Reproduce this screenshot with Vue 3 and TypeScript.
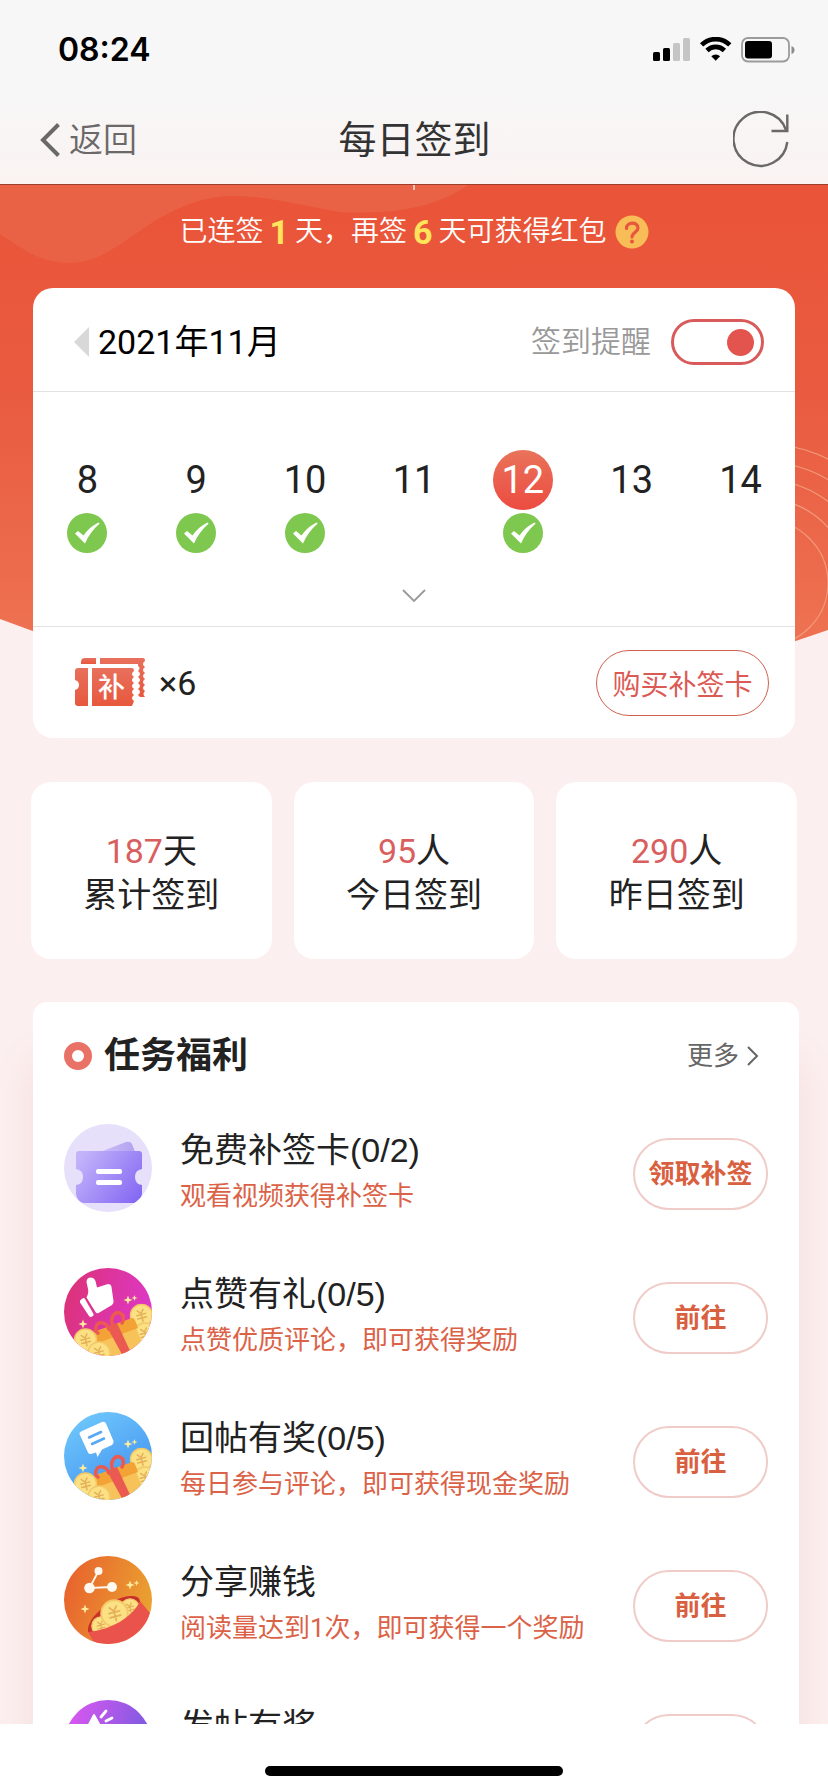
<script setup lang="ts">
import { ref } from 'vue'

interface Day {
  date: number
  signed: boolean
  today: boolean
}

interface Task {
  kind: 'ticket' | 'like' | 'reply' | 'share' | 'post'
  title: string
  hint: string
  action: string
}

const remind = ref<boolean>(true)

const days: Day[] = [8, 9, 10, 11, 12, 13, 14].map((date) => ({
  date,
  signed: [8, 9, 10, 12].includes(date),
  today: date === 12,
}))

const stats = [
  { value: 187, unit: '天', label: '累计签到' },
  { value: 95, unit: '人', label: '今日签到' },
  { value: 290, unit: '人', label: '昨日签到' },
]

const tasks: Task[] = [
  { kind: 'ticket', title: '免费补签卡(0/2)', hint: '观看视频获得补签卡', action: '领取补签' },
  { kind: 'like', title: '点赞有礼(0/5)', hint: '点赞优质评论，即可获得奖励', action: '前往' },
  { kind: 'reply', title: '回帖有奖(0/5)', hint: '每日参与评论，即可获得现金奖励', action: '前往' },
  { kind: 'share', title: '分享赚钱', hint: '阅读量达到1次，即可获得一个奖励', action: '前往' },
  { kind: 'post', title: '发帖有奖', hint: '', action: '前往' },
]
</script>

<template>
  <div class="screen">
    <!-- shared artwork and gradients -->
    <svg class="defs" width="0" height="0" aria-hidden="true">
      <defs>
        <linearGradient id="g-hero" x1="0" y1="0" x2="0" y2="1">
          <stop offset="0" stop-color="#ea5438" />
          <stop offset="0.4" stop-color="#e95b40" />
          <stop offset="0.88" stop-color="#ee7353" />
        </linearGradient>
        <linearGradient id="g-card" x1="0" y1="0" x2="0" y2="1">
          <stop offset="0" stop-color="#e8705c" />
          <stop offset="1" stop-color="#e7583d" />
        </linearGradient>
        <linearGradient id="g-ticket" x1="0" y1="0.2" x2="1" y2="0.8">
          <stop offset="0" stop-color="#c3b4fa" />
          <stop offset="1" stop-color="#8669f3" />
        </linearGradient>
        <linearGradient id="g-ticket-back" x1="0" y1="0.5" x2="1" y2="0.5">
          <stop offset="0" stop-color="#cabff8" />
          <stop offset="1" stop-color="#b3a2f1" />
        </linearGradient>
        <linearGradient id="g-like" x1="0" y1="0.3" x2="1" y2="0.6">
          <stop offset="0" stop-color="#dc3278" />
          <stop offset="1" stop-color="#dd38cc" />
        </linearGradient>
        <linearGradient id="g-reply" x1="0.2" y1="0" x2="0.8" y2="1">
          <stop offset="0" stop-color="#6fc8fb" />
          <stop offset="1" stop-color="#3f8df0" />
        </linearGradient>
        <linearGradient id="g-share" x1="0" y1="0.3" x2="1" y2="0.6">
          <stop offset="0" stop-color="#e8622d" />
          <stop offset="1" stop-color="#eaa331" />
        </linearGradient>
        <linearGradient id="g-post" x1="0" y1="0" x2="1" y2="0.3">
          <stop offset="0.1" stop-color="#d957f0" />
          <stop offset="1" stop-color="#7a5be0" />
        </linearGradient>
        <symbol id="coin" viewBox="0 0 24 24">
          <circle cx="12" cy="12" r="11" fill="#fbe184" stroke="#f3c868" stroke-width="1.6" />
          <g transform="rotate(-15 12 12)" fill="none" stroke="#e5b05a" stroke-width="1.5" stroke-linecap="round">
            <path d="M9 6.500l3 3.500 3-3.500M7.500 11h9M7.500 14.500h9M12 10v8" />
          </g>
        </symbol>
        <symbol id="sparkles" viewBox="0 0 88 88">
          <g fill="#fde9a0">
            <path d="M64 27.500l1.200 3.300 3.300 1.200-3.300 1.200-1.200 3.300-1.200-3.300-3.300-1.200 3.300-1.200z" />
            <path d="M70.500 27l.8 2.200 2.200.8-2.200.8-.8 2.200-.8-2.200-2.200-.8 2.200-.8z" />
            <path d="M19 51.500l1.200 3.300 3.300 1.200-3.300 1.200-1.200 3.300-1.200-3.300-3.300-1.200 3.300-1.200z" />
          </g>
        </symbol>
        <symbol id="gift" viewBox="0 0 88 88">
          <use href="#coin" x="65.500" y="35.500" width="24" height="24" />
          <use href="#coin" x="69" y="54" width="24" height="24" />
          <path d="M33 73L71 57 84 90H40z" fill="#f8c25a" />
          <path d="M30 66q0-2 2-3L68 50q2 0 3 2l3 8L34 75z" fill="#f3a335" />
          <path d="M43 59l10-4 15 32-8 3z" fill="#ea5a51" />
          <path d="M45 61c-3-8-12-8-13-2-1 3 0 5 2 6M49 58c-4-8 2-15 7-13 4 2 4 6 2 10" fill="none" stroke="#ea5a51" stroke-width="3.600" stroke-linecap="round" />
          <use href="#coin" x="9.500" y="60" width="24" height="24" />
          <use href="#coin" x="23" y="73" width="24" height="24" />
        </symbol>
      </defs>
    </svg>

    <header class="top">
      <div class="status">
        <time class="clock">08:24</time>
        <svg class="status-icons" width="142" height="26" viewBox="0 0 142 26" aria-hidden="true">
          <rect x="0" y="15" width="7" height="9" rx="1.500" />
          <rect x="10" y="11" width="7" height="13" rx="1.500" />
          <rect x="20" y="6" width="7" height="18" rx="1.500" fill="#c5c5c5" />
          <rect x="30" y="1" width="7" height="23" rx="1.500" fill="#c5c5c5" />
          <g fill="none" stroke="#000" stroke-width="4.600">
            <path d="M48.600 7.900a20 20 0 0 1 28.200 0" />
            <path d="M54 13.500a12.300 12.300 0 0 1 17.400 0" />
          </g>
          <path d="M58.300 19.200a6.400 6.400 0 0 1 8.800 0l-4.400 4.600z" />
          <rect x="89" y="1" width="47" height="23.500" rx="6" fill="none" stroke="#9b9b9b" stroke-width="1.800" />
          <rect x="92" y="4" width="27" height="17.500" rx="3" />
          <path d="M138.500 9q3 1 3 4t-3 4z" fill="#8c8c8c" />
        </svg>
      </div>
      <nav class="nav">
        <a class="back" href="#back">
          <svg width="20" height="34" viewBox="0 0 20 34" aria-hidden="true">
            <path d="M18.500 1.500L3 17l15.500 15.500" fill="none" stroke="#6b6869" stroke-width="4" />
          </svg>
          <span>返回</span>
        </a>
        <h1 class="title">每日签到</h1>
        <button class="refresh" type="button" aria-label="刷新">
          <svg width="56" height="58" viewBox="0 0 56 58" fill="none" stroke="#6b6869" stroke-width="2.400" aria-hidden="true">
            <path d="M54.300 31A27 27 0 1 1 53 19" />
            <path d="M54.300 3.500V20H38.500" />
          </svg>
        </button>
      </nav>
    </header>

    <main class="content">
      <svg class="hero" viewBox="0 0 828 530" preserveAspectRatio="none" aria-hidden="true">
        <clipPath id="hero-clip"><path d="M0 0H828V445Q414 592 0 434z" /></clipPath>
        <g clip-path="url(#hero-clip)">
          <rect width="828" height="530" fill="url(#g-hero)" />
          <path d="M0 0H468C440 20 400 30 340 27 290 18 260 10 225 11 150 18 120 78 70 78 40 78 20 62 0 49z" fill="#ea6245" />
          <g fill="none" stroke="#f39a7c" stroke-width="1.200">
            <circle cx="765" cy="398" r="63" />
            <circle cx="765" cy="398" r="84" />
            <circle cx="765" cy="398" r="103" />
            <circle cx="765" cy="398" r="121" />
            <circle cx="765" cy="398" r="139" />
          </g>
          <path d="M414 0v5" stroke="#fbe3dc" stroke-width="1.500" />
        </g>
      </svg>

      <div class="notice">
        <span>已连签</span><strong>1</strong><span>天，再签</span><strong>6</strong><span>天可获得红包</span>
        <button class="help" type="button" aria-label="帮助">
          <svg width="34" height="34" viewBox="0 0 34 34" aria-hidden="true">
            <circle cx="17" cy="17" r="16.500" fill="#f9bd58" />
            <path d="M11.500 13.500c0-7 11.500-7 11.500-.5 0 4-6 4.500-6 9" fill="none" stroke="#e8573c" stroke-width="3.200" stroke-linecap="round" />
            <circle cx="17" cy="26.500" r="2" fill="#e8573c" />
          </svg>
        </button>
      </div>

      <section class="calendar">
        <div class="cal-head">
          <button class="month" type="button">
            <svg width="15" height="30" viewBox="0 0 15 30" aria-hidden="true"><path d="M15 0v30L0 15z" fill="#d8d8d8" /></svg>
            <span>2021年11月</span>
          </button>
          <label class="remind">
            <span>签到提醒</span>
            <input v-model="remind" class="switch" type="checkbox" />
          </label>
        </div>
        <div class="cal-body">
          <ol class="days">
            <li v-for="d in days" :key="d.date" class="day">
              <span class="date" :class="{ today: d.today }">{{ d.date }}</span>
              <svg v-if="d.signed" width="40" height="40" viewBox="0 0 40 40" aria-label="已签到">
                <circle cx="20" cy="20" r="20" fill="#7fc850" />
                <path d="M8 20.500l3-2.500 5.500 4.500C21 16 27 11.500 32 9.500l.5 1.200C26 16 21.500 22.500 18 30.500z" fill="#fff" />
              </svg>
            </li>
          </ol>
          <button class="expand" type="button" aria-label="展开">
            <svg width="24" height="14" viewBox="0 0 24 14" aria-hidden="true"><path d="M1 1l11 11L23 1" fill="none" stroke="#999" stroke-width="1.800" /></svg>
          </button>
        </div>
        <div class="cal-foot">
          <svg class="cards-icon" width="72" height="49" viewBox="0 0 72 49" aria-hidden="true">
            <g fill="url(#g-card)">
              <path d="M11 0h11v6H7V4q0-4 4-4z" />
              <path d="M26 0h43q2 0 2 3-4 3 0 6-4 3 0 6-4 3 0 6-4 3 0 6-4 3 0 6-3 3 0 6h-5l-2-2q4-3 0-6 4-3 0-6 4-3 0-6 4-3 0-6 3-3 0-5V6H26z" />
              <path d="M4 10h10v38H4q-3 0-3-3V32q4-1 4-5t-4-5v-9q0-3 3-3z" />
              <path d="M18 10h40q2 0 2 3-4 3 0 6-4 3 0 6-4 3 0 6-4 3 0 6-4 3 0 6-2 5-2 5H18z" />
            </g>
            <text x="24" y="39" class="cards-text">补</text>
          </svg>
          <span class="count">×6</span>
          <button class="buy" type="button">购买补签卡</button>
        </div>
      </section>

      <section class="stats">
        <div v-for="s in stats" :key="s.label" class="stat">
          <p><em>{{ s.value }}</em>{{ s.unit }}</p>
          <p>{{ s.label }}</p>
        </div>
      </section>

      <section class="tasks">
        <div class="tasks-head">
          <svg width="28" height="28" viewBox="0 0 28 28" aria-hidden="true"><circle cx="14" cy="14" r="10" fill="none" stroke="#ea7166" stroke-width="8" /></svg>
          <h2>任务福利</h2>
          <a class="more" href="#more">
            <span>更多</span>
            <svg width="12" height="20" viewBox="0 0 12 20" aria-hidden="true"><path d="M1 1l9 9-9 9" fill="none" stroke="#666" stroke-width="2" /></svg>
          </a>
        </div>
        <ul class="task-list">
          <li v-for="t in tasks" :key="t.title" class="task">
            <svg class="task-icon" width="88" height="88" viewBox="0 0 88 88" aria-hidden="true">
              <template v-if="t.kind === 'ticket'">
                <rect width="88" height="88" fill="#e6e0fa" />
                <path d="M36 28L62 18q4-1 6 2l3 8z" fill="url(#g-ticket-back)" />
                <path d="M15 27H75q3 0 3 3V45q-7 1-7 8t7 8V70q-1 8-8 9H19q-6-2-7-9V61q7-1 7-8t-7-8V30q0-3 3-3z" fill="url(#g-ticket)" />
                <rect x="32" y="45" width="26" height="5" rx="2" fill="#fff" />
                <rect x="32" y="56" width="26" height="5" rx="2" fill="#fff" />
              </template>
              <template v-else-if="t.kind === 'like'">
                <rect width="88" height="88" fill="url(#g-like)" />
                <path d="M16 32.500l2.500-2q1.500-1 2.500.5L29.500 46q.5 1-.5 2l-2 1q-1 .5-2-1L16 34.500z" fill="#fff" />
                <path d="M22.500 29.500Q25 25 24 21L22.500 14c0-5.500 7-6 9-1L33 19.500 44 16q3 0 3.500 3l2 14q.5 2.500-1.500 4L34.500 45q-2 1-3-1z" fill="#fff" />
                <use href="#sparkles" />
                <use href="#gift" />
              </template>
              <template v-else-if="t.kind === 'reply'">
                <rect width="88" height="88" fill="url(#g-reply)" />
                <path d="M17 19.500L38 10q3-1 4 1.500L49.500 29q.5 2.500-1.500 4L38 37.500 33.500 45 32 40.500 27 42q-2 .5-3-1.500L15.500 22q-.5-1.500 1.500-2.500z" fill="#fff" />
                <path d="M25 25.500L37 20M28 32l12-5.500" stroke="#57a9f5" stroke-width="2.600" stroke-linecap="round" />
                <use href="#sparkles" />
                <use href="#gift" />
              </template>
              <template v-else-if="t.kind === 'share'">
                <rect width="88" height="88" fill="url(#g-share)" />
                <path d="M34.500 15l-9 17L48 31" fill="none" stroke="#fff8ee" stroke-width="1.800" />
                <g fill="#fff8ee">
                  <circle cx="34.500" cy="15" r="4" />
                  <circle cx="25.500" cy="32" r="5.300" />
                  <circle cx="48" cy="31" r="5" />
                </g>
                <use href="#sparkles" x="2" y="-3" />
                <path d="M24 76C22 62 46 42 66 40q10-1 10 6L40 78z" fill="#c9302b" />
                <use href="#coin" x="27" y="60" width="20" height="20" />
                <use href="#coin" x="56" y="42" width="20" height="20" />
                <use href="#coin" x="36" y="43" width="29" height="29" />
                <path d="M24 76C46 74 68 62 76 45L90 62V90H32z" fill="#ea534c" />
              </template>
              <template v-else>
                <rect width="88" height="88" fill="url(#g-post)" />
                <path d="M30 15L20 34 44 40z" fill="#fff" stroke="#fff" stroke-width="2" stroke-linejoin="round" />
                <path d="M37 17l5-6M42 21l6-3" stroke="#fff" stroke-width="2.800" stroke-linecap="round" />
              </template>
            </svg>
            <div class="task-text">
              <h3>{{ t.title }}</h3>
              <p v-if="t.hint">{{ t.hint }}</p>
            </div>
            <button class="go" type="button">{{ t.action }}</button>
          </li>
        </ul>
      </section>
    </main>

    <footer class="home"><span class="bar"></span></footer>
  </div>
</template>

<style>
html,
body {
  margin: 0;
  background: #fff;
}
</style>

<style scoped>
.screen {
  display: flex;
  flex-direction: column;
  height: 100vh;
  overflow: hidden;
  background: #fff;
  color: #222;
  font-family: Roboto, "Noto Sans CJK SC", sans-serif;
  font-size: 34px;
  font-weight: 400;
}
.screen * {
  box-sizing: border-box;
}
h1,
h2,
h3,
p,
ol,
ul {
  margin: 0;
  padding: 0;
  list-style: none;
  font-weight: inherit;
  font-size: inherit;
}
button {
  padding: 0;
  border: 0;
  background: none;
  color: inherit;
  font: inherit;
}
a {
  color: inherit;
  text-decoration: none;
}
svg {
  display: block;
  flex: none;
}
.defs {
  position: absolute;
}
.top {
  flex: none;
  border-bottom: 1px solid #9c3f2b;
  background: linear-gradient(#f7f7f7 45%, #faf3f2);
}
.status {
  display: flex;
  align-items: center;
  justify-content: space-between;
  height: 99px;
  padding: 0 33px 0 58px;
}
.clock {
  color: #000;
  font-family: Inter, sans-serif;
  font-size: 32px;
  font-weight: 600;
}
.nav {
  display: grid;
  grid-template-columns: 1fr auto 1fr;
  align-items: center;
  height: 85px;
  padding: 0 39px 4px 40px;
}
.back {
  display: flex;
  align-items: center;
  gap: 9px;
  color: #6b6869;
  font-weight: 350;
  line-height: 40px;
}
.title {
  color: #333;
  font-size: 38px;
  line-height: 48px;
}
.refresh {
  justify-self: end;
}
.content {
  position: relative;
  flex: 1;
  min-height: 0;
  overflow: hidden;
  background: #fcefef;
}
.hero {
  position: absolute;
  top: 0;
  left: 0;
  width: 100%;
  height: 530px;
}
.notice {
  position: relative;
  display: flex;
  align-items: center;
  justify-content: center;
  height: 92px;
  padding-top: 2px;
  color: #fff;
  font-size: 28px;
  font-weight: 350;
  line-height: 40px;
}
.notice strong {
  margin: 0 6px;
  color: #ffe45c;
  font-size: 34px;
  font-weight: 700;
}
.help {
  margin-left: 8px;
}
.calendar {
  position: relative;
  margin: 11px 33px 0;
  border-radius: 20px;
  background: #fff;
}
.cal-head {
  display: flex;
  align-items: center;
  justify-content: space-between;
  height: 104px;
  padding: 5px 31px 0 41px;
  border-bottom: 1px solid #e2e2e2;
  line-height: 40px;
}
.month {
  display: flex;
  align-items: center;
  gap: 9px;
  color: #000;
  line-height: 40px;
}
.remind {
  display: flex;
  align-items: center;
  gap: 20px;
  color: #999;
  font-size: 30px;
  font-weight: 350;
}
.switch {
  display: flex;
  align-items: center;
  justify-content: flex-start;
  width: 93px;
  height: 46px;
  margin: 0;
  padding: 0 7px;
  border: 3px solid #d95a5a;
  border-radius: 23px;
  background: #fff;
  appearance: none;
}
.switch:checked {
  justify-content: flex-end;
}
.switch::before {
  content: "";
  width: 27px;
  height: 27px;
  border-radius: 50%;
  background: #e4544f;
}
.cal-body {
  padding: 58px 0 23px;
  border-bottom: 1px solid #e2e2e2;
}
.days {
  display: grid;
  grid-template-columns: repeat(7, 1fr);
  height: 103px;
}
.day {
  display: flex;
  flex-direction: column;
  align-items: center;
  gap: 3px;
}
.date {
  width: 60px;
  height: 60px;
  border-radius: 50%;
  font-size: 38px;
  line-height: 60px;
  text-align: center;
}
.today {
  background: linear-gradient(#e9735a, #ec4b40);
  color: #fff;
}
.expand {
  display: block;
  margin: 36px auto 0;
}
.cal-foot {
  display: flex;
  align-items: center;
  height: 111px;
  padding: 0 26px 0 41px;
}
.cards-text {
  fill: #fff;
  font-size: 27px;
  font-weight: 500;
}
.count {
  margin-left: 13px;
}
.buy {
  width: 173px;
  height: 66px;
  margin-left: auto;
  border: 1px solid #d0604f;
  border-radius: 33px;
  color: #dc5a55;
  font-size: 28px;
}
.stats {
  position: relative;
  display: grid;
  grid-template-columns: repeat(3, 1fr);
  gap: 22px;
  margin: 44px 31px 0;
}
.stat {
  padding: 47px 0 42px;
  border-radius: 20px;
  background: #fff;
  line-height: 44px;
  text-align: center;
}
.stat em {
  color: #d95f5f;
  font-style: normal;
}
.tasks {
  position: relative;
  margin: 43px 29px 0 33px;
  padding: 0 31px;
  border-radius: 14px;
  background: #fff;
  box-shadow: 0 60px 40px rgba(210, 130, 130, 0.15);
}
.tasks-head {
  display: flex;
  align-items: center;
  height: 108px;
  margin-bottom: 14px;
  line-height: 40px;
}
.tasks-head h2 {
  margin-left: 12px;
  font-size: 36px;
  font-weight: 700;
}
.more {
  display: flex;
  align-items: center;
  gap: 8px;
  margin-left: auto;
  padding-right: 9px;
  color: #666;
  font-size: 26px;
}
.task {
  display: flex;
  align-items: flex-start;
  height: 144px;
}
.task-icon {
  border-radius: 50%;
  overflow: hidden;
}
.task-text {
  flex: 1;
  margin-left: 28px;
  white-space: nowrap;
}
.task-text h3 {
  font-family: "Liberation Sans", "Noto Sans CJK SC", sans-serif;
  line-height: 52px;
}
.task-text p {
  color: #db6247;
  font-size: 26px;
  line-height: 40px;
}
.go {
  width: 135px;
  height: 72px;
  margin-top: 14px;
  border: 2px solid #efccc7;
  border-radius: 36px;
  color: #d9603f;
  font-size: 26px;
  font-weight: 700;
  line-height: 40px;
}
.home {
  display: flex;
  flex: none;
  align-items: flex-start;
  justify-content: center;
  height: 68px;
  padding-top: 42px;
  background: #fff;
}
.bar {
  width: 36%;
  height: 10px;
  border-radius: 5px;
  background: #000;
}
</style>
